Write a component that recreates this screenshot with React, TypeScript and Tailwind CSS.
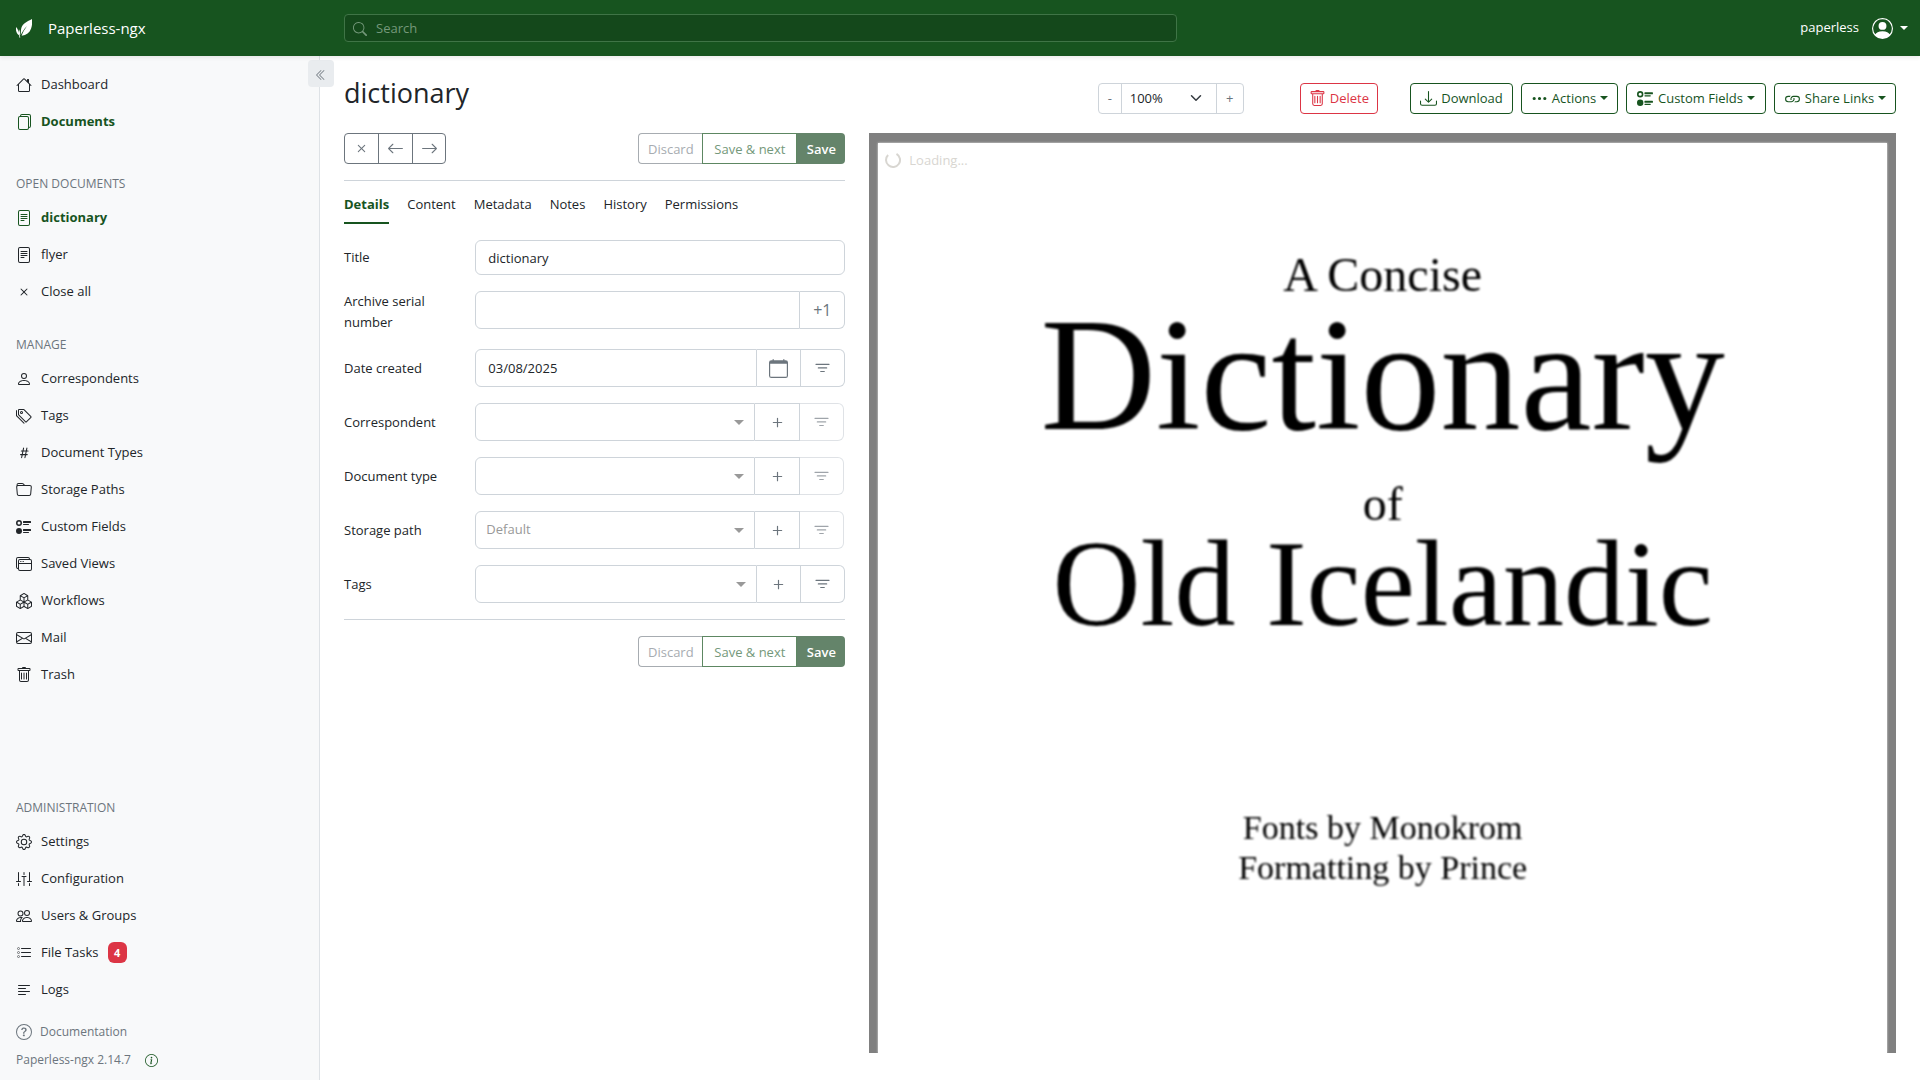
import type { ReactNode } from 'react';
import type { IconType } from 'react-icons';
import {
  BsArrowLeft, BsArrowRight, BsBoxes, BsCalendar, BsChevronDoubleLeft, BsDownload, BsEnvelope, BsFileText,
  BsFiles, BsFilter, BsFolder, BsGear, BsHash, BsHouse, BsInfoCircle, BsLink, BsListTask, BsPeople, BsPerson,
  BsPersonCircle, BsPlus, BsQuestionCircle, BsSearch, BsSliders2Vertical, BsTags, BsTextLeft, BsThreeDots,
  BsTrash, BsUiRadios, BsWindowStack, BsX,
} from 'react-icons/bs';

function Leaf() {
  return (
    <svg viewBox="0 0 48 57" className="h-[19px] w-4" fill="currentColor" aria-hidden="true">
      <path d="M48 0C34 7 20 14 16 27c-2 8-1 15-2 22 4-9 10-19 19-28-8 11-13 20-16 29 14-2 24-9 28-21C49 19 49 9 48 0Z" />
      <path d="M0 24c-1 9 0 18 9 25l2 8 2-2-2-7c2-6 1-12-2-17-1 4-1 8 0 12C7 35 5 29 0 24Z" />
    </svg>
  );
}

function Caret({ className = 'h-1 w-2' }: { className?: string }) {
  return (
    <svg viewBox="0 0 8 4" className={`shrink-0 ${className}`} fill="currentColor" aria-hidden="true">
      <path d="M0 0h8L4 4z" />
    </svg>
  );
}

function NavItem({ icon: Icon, label, active = false, badge }: { icon: IconType; label: string; active?: boolean; badge?: string }) {
  return (
    <li>
      <a href="#" className={`flex h-[37px] items-center px-4 ${active ? 'font-bold text-[#17541f]' : ''}`}>
        <Icon className="mr-[9px] size-4 shrink-0" />
        {label}
        {badge && <span className="ml-[9px] w-[19px] rounded-md bg-[#dc3545] text-center text-[11px] leading-[21px] font-bold text-white">{badge}</span>}
      </a>
    </li>
  );
}

function NavHeading({ children }: { children: ReactNode }) {
  return <h6 className="mb-1.5 px-4 text-xs leading-[18px] text-[#6c757d] uppercase">{children}</h6>;
}

function Sidebar() {
  return (
    <nav className="relative flex w-80 shrink-0 flex-col border-r border-[#dee2e6] bg-[#f8f9fa] pt-[10px] pb-[10px]">
      <button aria-label="Collapse sidebar" className="absolute top-1 -right-[15px] flex h-[27px] w-[26px] items-center justify-center rounded bg-[#e9ecef] pt-0.5 text-[#6c757d]">
        <BsChevronDoubleLeft className="size-3" />
      </button>
      <ul>
        <NavItem icon={BsHouse} label="Dashboard" />
        <NavItem icon={BsFiles} label="Documents" active />
      </ul>
      <div className="mt-[35px]">
        <NavHeading>Open documents</NavHeading>
        <ul>
          <NavItem icon={BsFileText} label="dictionary" active />
          <NavItem icon={BsFileText} label="flyer" />
          <NavItem icon={BsX} label="Close all" />
        </ul>
      </div>
      <div className="mt-[26px]">
        <NavHeading>Manage</NavHeading>
        <ul>
          <NavItem icon={BsPerson} label="Correspondents" />
          <NavItem icon={BsTags} label="Tags" />
          <NavItem icon={BsHash} label="Document Types" />
          <NavItem icon={BsFolder} label="Storage Paths" />
          <NavItem icon={BsUiRadios} label="Custom Fields" />
          <NavItem icon={BsWindowStack} label="Saved Views" />
          <NavItem icon={BsBoxes} label="Workflows" />
          <NavItem icon={BsEnvelope} label="Mail" />
          <NavItem icon={BsTrash} label="Trash" />
        </ul>
      </div>
      <div className="mt-auto">
        <NavHeading>Administration</NavHeading>
        <ul>
          <NavItem icon={BsGear} label="Settings" />
          <NavItem icon={BsSliders2Vertical} label="Configuration" />
          <NavItem icon={BsPeople} label="Users & Groups" />
          <NavItem icon={BsListTask} label="File Tasks" badge="4" />
          <NavItem icon={BsTextLeft} label="Logs" />
        </ul>
      </div>
      <div className="mt-[14px] px-4 text-xs leading-5 text-[#6c757d]">
        <a href="#" className="flex items-center">
          <BsQuestionCircle className="mr-2 size-4" />
          Documentation
        </a>
        <div className="mt-2 flex items-center">
          <a href="#">Paperless-ngx 2.14.7</a>
          <a href="#" aria-label="Update information" className="ml-3.5 text-[#17541f]">
            <BsInfoCircle className="size-[13px]" />
          </a>
        </div>
      </div>
    </nav>
  );
}

const primaryOutline = 'border-[#17541f] text-[#17541f]';

function ToolbarButton({ icon: Icon, label, caret = false, className }: { icon: IconType; label: string; caret?: boolean; className: string }) {
  return (
    <button className={`flex h-[31px] items-center justify-center gap-1 rounded border px-2 whitespace-nowrap ${className}`}>
      <Icon className="size-[17px]" />
      {label}
      {caret && <Caret className="mb-0.5 h-1 w-2" />}
    </button>
  );
}

function SaveButtons() {
  return (
    <div className="flex h-[31px] leading-5">
      <button disabled className="min-w-16 rounded-l border border-r-0 border-[#a7acb1] px-2 text-[#a7acb1]">Discard</button>
      <button disabled className="min-w-[95px] border border-[#5d8762] px-2 text-[#74987a]">Save &amp; next</button>
      <button disabled className="min-w-12 rounded-r bg-[#64846a] px-2 font-semibold text-white">Save</button>
    </div>
  );
}

function Row({ label, id, children }: { label: string; id: string; children: ReactNode }) {
  return (
    <div className="mb-4 grid grid-cols-4 gap-x-6">
      <label htmlFor={id} className="self-center leading-[21px]">{label}</label>
      <div className="col-span-3 flex">{children}</div>
    </div>
  );
}

const groupButton = 'flex h-[38px] shrink-0 items-center justify-center border border-l-0 border-[#ced4da] text-[#6c757d]';

function SelectRow({ label, id, placeholder = '', filterable = false }: { label: string; id: string; placeholder?: string; filterable?: boolean }) {
  return (
    <Row label={label} id={id}>
      <div className="relative flex-1">
        <select id={id} className="h-[38px] w-full appearance-none rounded-l-md border border-[#ced4da] bg-white px-[10px] text-[#999999]">
          <option>{placeholder}</option>
        </select>
        <Caret className="pointer-events-none absolute top-[17px] right-[11px] h-[5px] w-[10px] text-[#999999]" />
      </div>
      <button aria-label={`Add ${label}`} className={`${groupButton} ${filterable ? 'w-11' : 'w-[45px]'}`}>
        <BsPlus className="size-[19px]" />
      </button>
      <button
        disabled={!filterable}
        aria-label={`Filter by ${label}`}
        className={`${groupButton} w-11 rounded-r-md ${filterable ? '' : 'mr-px opacity-65'}`}
      >
        <BsFilter className="size-[19px]" />
      </button>
    </Row>
  );
}

const tabs = ['Details', 'Content', 'Metadata', 'Notes', 'History', 'Permissions'];

function DocumentForm() {
  return (
    <section>
      <div className="flex justify-between">
        <div className="flex h-[31px] divide-x divide-[#6c757d] rounded border border-[#6c757d] text-[#6c757d]">
          <button aria-label="Close" className="w-[34px]"><BsX className="mx-auto size-[17px]" /></button>
          <button aria-label="Previous" className="w-[34px]"><BsArrowLeft className="mx-auto size-[17px]" /></button>
          <button aria-label="Next" className="w-8"><BsArrowRight className="mx-auto size-[17px]" /></button>
        </div>
        <SaveButtons />
      </div>
      <hr className="mt-4 border-[#ced4da]" />
      <div role="tablist" className="mb-4 flex gap-[18px] pt-[13px]">
        {tabs.map((tab, i) => (
          <button
            key={tab}
            role="tab"
            aria-selected={i === 0}
            className={`border-b-2 pb-2 leading-5 ${i === 0 ? 'border-[#17541f] font-bold text-[#17541f]' : 'border-transparent'}`}
          >
            {tab}
          </button>
        ))}
      </div>
      <Row label="Title" id="title">
        <input id="title" defaultValue="dictionary" className="h-[35px] w-full rounded-md border border-[#ced4da] px-3" />
      </Row>
      <Row label="Archive serial number" id="asn">
        <input id="asn" className="h-[38px] min-w-0 flex-1 rounded-l-md border border-[#ced4da] px-3" />
        <button className={`${groupButton} w-[45px] rounded-r-md text-base`}>+1</button>
      </Row>
      <Row label="Date created" id="created">
        <input id="created" defaultValue="03/08/2025" className="h-[38px] min-w-0 flex-1 rounded-l-md border border-[#ced4da] px-3" />
        <button aria-label="Open calendar" className={`${groupButton} w-11`}><BsCalendar className="size-[19px]" /></button>
        <button aria-label="Filter by date" className={`${groupButton} w-11 rounded-r-md`}><BsFilter className="size-[19px]" /></button>
      </Row>
      <SelectRow label="Correspondent" id="correspondent" />
      <SelectRow label="Document type" id="doctype" />
      <SelectRow label="Storage path" id="storage" placeholder="Default" />
      <SelectRow label="Tags" id="tags" filterable />
      <hr className="mb-4 border-[#ced4da]" />
      <div className="flex justify-end"><SaveButtons /></div>
    </section>
  );
}

function Preview() {
  return (
    <section className="relative col-span-2 h-[calc(100vh-160px)] overflow-hidden bg-[#808080] px-[9px] pt-[10px]">
      <div className="h-full bg-white pt-[108px] text-center font-['Liberation_Serif',serif] whitespace-nowrap text-black shadow-[0_0_2px_#e5e5e5]">
        <div className="blur-[1px]">
          <p className="text-5xl leading-12">A Concise</p>
          <p className="text-[160px] leading-[152px]">Dictionary</p>
          <p className="mt-[29px] text-5xl leading-12">of</p>
          <p className="text-[122px] leading-[112px]">Old Icelandic</p>
          <p className="mt-[168px] text-[34px] leading-10">Fonts by Monokrom<br />Formatting by Prince</p>
        </div>
      </div>
      <div className="absolute top-[17px] left-4 flex items-center gap-2 leading-5 text-[#d8d6d1]">
        <svg viewBox="0 0 16 16" className="size-4" fill="none" stroke="currentColor" strokeWidth="2" aria-hidden="true">
          <path d="M11.5 1.9a7 7 0 1 1-8.4 1.1" />
        </svg>
        Loading...
      </div>
    </section>
  );
}

export default function App() {
  return (
    <div className="flex min-h-screen flex-col bg-white font-['Open_Sans','Noto_Sans',sans-serif] text-[13px] text-[#212529]">
      <header className="relative z-10 flex h-14 items-center bg-[#17541f] text-white shadow-[0_2px_4px_rgba(0,0,0,0.075)]">
        <a href="#" className="flex w-[344px] shrink-0 items-center gap-4 pl-4 text-[15px]">
          <Leaf />
          Paperless-ngx
        </a>
        <div className="relative max-w-[833px] flex-1">
          <BsSearch className="absolute top-2 left-[9px] size-[14px] text-[#74987a]" />
          <input
            aria-label="Search"
            placeholder="Search"
            className="block h-7 w-full rounded border border-[#3f7446] bg-[#14481b] pl-[31px] placeholder:text-[#74987a]"
          />
        </div>
        <button className="mr-3 ml-auto flex items-center">
          paperless
          <BsPersonCircle className="mr-[7px] ml-[13px] size-[21px]" />
          <Caret />
        </button>
      </header>
      <div className="flex flex-1">
        <Sidebar />
        <main className="min-w-0 flex-1 px-6 pt-5">
          <div className="mb-[19px] flex h-[38px] items-end">
            <h3 className="mr-auto self-start text-[27px] leading-[34px]">dictionary</h3>
            <div className="mr-14 flex h-[31px] rounded border border-[#ced4da] text-[#6c757d]">
              <button aria-label="Zoom out" className="w-[22px]">-</button>
              <div className="relative border-x border-[#ced4da]">
                <select aria-label="Zoom" className="h-full w-[94px] appearance-none pl-2 text-[#212529]">
                  <option>100%</option>
                </select>
                <svg viewBox="0 0 16 16" className="pointer-events-none absolute top-2 right-3.5 size-3" fill="none" stroke="#343a40" strokeWidth="2" strokeLinecap="round" strokeLinejoin="round" aria-hidden="true">
                  <path d="m2 5 6 6 6-6" />
                </svg>
              </div>
              <button aria-label="Zoom in" className="w-[26px]">+</button>
            </div>
            <ToolbarButton icon={BsTrash} label="Delete" className="mr-8 border-[#dc3545] text-[#dc3545]" />
            <div className="flex gap-2">
              <ToolbarButton icon={BsDownload} label="Download" className={`min-w-[103px] ${primaryOutline}`} />
              <ToolbarButton icon={BsThreeDots} label="Actions" caret className={`min-w-[97px] ${primaryOutline}`} />
              <ToolbarButton icon={BsUiRadios} label="Custom Fields" caret className={`min-w-[140px] ${primaryOutline}`} />
              <ToolbarButton icon={BsLink} label="Share Links" caret className={`min-w-[122px] ${primaryOutline}`} />
            </div>
          </div>
          <div className="grid grid-cols-3 gap-6">
            <DocumentForm />
            <Preview />
          </div>
        </main>
      </div>
    </div>
  );
}
